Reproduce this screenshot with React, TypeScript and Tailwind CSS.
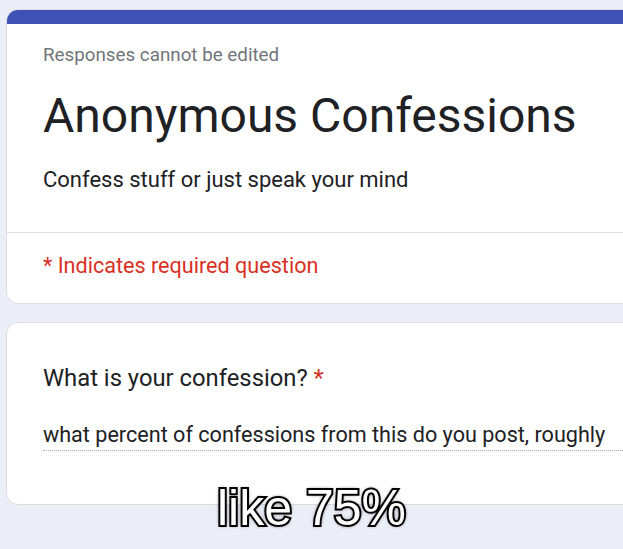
import React from 'react';

const ANSWER = 'what percent of confessions from this do you post, roughly';

export default function App() {
  return (
    <div className="relative h-[549px] w-[623px] overflow-hidden bg-[#ebedf7] pl-[6px] pt-[9px] font-['Roboto',sans-serif]">
      <div className="w-[660px] overflow-hidden rounded-[12px] border border-[#dadce0] bg-white">
        <div className="-mx-px -mt-px h-[15px] bg-[#3f51b5]" />
        <div className="pl-[36px]">
          <p className="mt-[19px] text-[18.8px] leading-[24px] text-[#70757a]">Responses cannot be edited</p>
          <h1 className="mt-[21px] text-[48px] leading-[56px] text-[#202124]">Anonymous Confessions</h1>
          <p className="mt-[22px] text-[22px] leading-[28px] text-[#202124]">Confess stuff or just speak your mind</p>
        </div>
        <div className="mt-[38px] h-px bg-[#dadce0]" />
        <p className="mt-[19px] pb-[23px] pl-[36px] text-[21.6px] leading-[28px] text-[#d93025]">* Indicates required question</p>
      </div>

      <div className="mt-[18px] w-[660px] rounded-[12px] border border-[#dadce0] bg-white pb-[53px] pl-[36px] pt-[39px]">
        <p className="text-[23.8px] leading-[32px] text-[#202124]">
          What is your confession? <span className="text-[#d93025]">*</span>
        </p>
        <div className="mt-[27px] border-b border-dotted border-[#a8abb0] pb-px text-[21.6px] leading-[28px] text-[#202124]">
          {ANSWER}
        </div>
      </div>

      <div className="absolute left-0 right-0 top-[480px] text-center font-['Liberation_Sans',Arial,sans-serif] text-[50px] leading-[56px] text-white [paint-order:stroke_fill] [-webkit-text-stroke:4px_#000] [text-shadow:0_0_4px_#000]">
        like 75%
      </div>
    </div>
  );
}
